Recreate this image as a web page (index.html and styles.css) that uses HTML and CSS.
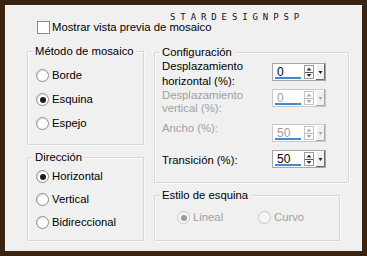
FILE: index.html
```html
<!DOCTYPE html>
<html lang="es">
<head>
    <meta charset="UTF-8">
    <meta name="viewport" content="width=device-width, initial-scale=1.0">
    <title>Mosaico</title>
    <link rel="stylesheet" href="styles.css">
</head>
<body>
    <div class="frame">
        <div class="panel">
            <div class="watermark">STARDESIGNPSP</div>
            <label class="check-row">
                <span class="checkbox"></span>
                <span>Mostrar vista previa de mosaico</span>
            </label>

            <div class="columns">
                <div class="col-left">
                    <div class="group group-method">
                        <div class="group-title">Método de mosaico</div>
                        <div class="radio-list">
                            <div class="radio-row"><span class="radio"></span>Borde</div>
                            <div class="radio-row"><span class="radio checked"></span>Esquina</div>
                            <div class="radio-row"><span class="radio"></span>Espejo</div>
                        </div>
                    </div>
                    <div class="group group-direction">
                        <div class="group-title">Dirección</div>
                        <div class="radio-list">
                            <div class="radio-row"><span class="radio checked"></span>Horizontal</div>
                            <div class="radio-row"><span class="radio"></span>Vertical</div>
                            <div class="radio-row"><span class="radio"></span>Bidireccional</div>
                        </div>
                    </div>
                </div>

                <div class="col-right">
                    <div class="group group-config">
                        <div class="group-title">Configuración</div>

                        <div class="field-row row-1">
                            <div class="field-label">Desplazamiento<br>horizontal (%):</div>
                            <div class="spin">
                                <span class="spin-value">0</span>
                                <span class="spin-bar"></span>
                                <svg class="spin-buttons" width="22" height="16" viewBox="0 0 22 16">
                                    <rect x="1.5" y="1.5" width="9" height="13" fill="#fff" stroke="#9a9a9a"/>
                                    <path d="M3.5 6.5 L8.5 6.5 L6 3.5 Z" fill="#333"/>
                                    <line x1="2" y1="8.5" x2="10" y2="8.5" stroke="#555"/>
                                    <path d="M3.5 10 L8.5 10 L6 13 Z" fill="#333"/>
                                    <rect x="13" y="0" width="9" height="16" fill="#f0f0f0"/>
                                    <path d="M13.5 16 L13.5 0.5 L21 0.5" fill="none" stroke="#fff"/>
                                    <path d="M21.5 0 L21.5 15.5 L13 15.5" fill="none" stroke="#696969"/>
                                    <path d="M15.5 7 L19.5 7 L17.5 10 Z" fill="#222"/>
                                </svg>
                            </div>
                        </div>

                        <div class="field-row row-2 disabled">
                            <div class="field-label">Desplazamiento<br>vertical (%):</div>
                            <div class="spin">
                                <span class="spin-value">0</span>
                                <span class="spin-bar"></span>
                                <svg class="spin-buttons" width="22" height="16" viewBox="0 0 22 16">
                                    <rect x="1.5" y="1.5" width="9" height="13" fill="#fff" stroke="#c4c4c4"/>
                                    <path d="M3.5 6.5 L8.5 6.5 L6 3.5 Z" fill="#a8a8a8"/>
                                    <line x1="2" y1="8.5" x2="10" y2="8.5" stroke="#b4b4b4"/>
                                    <path d="M3.5 10 L8.5 10 L6 13 Z" fill="#a8a8a8"/>
                                    <rect x="13" y="0" width="9" height="16" fill="#f0f0f0"/>
                                    <path d="M13.5 16 L13.5 0.5 L21 0.5" fill="none" stroke="#fff"/>
                                    <path d="M21.5 0 L21.5 15.5 L13 15.5" fill="none" stroke="#a9a9a9"/>
                                    <path d="M15.5 7 L19.5 7 L17.5 10 Z" fill="#a8a8a8"/>
                                </svg>
                            </div>
                        </div>

                        <div class="field-row row-3 disabled">
                            <div class="field-label">Ancho (%):</div>
                            <div class="spin">
                                <span class="spin-value">50</span>
                                <span class="spin-bar"></span>
                                <svg class="spin-buttons" width="22" height="16" viewBox="0 0 22 16">
                                    <rect x="1.5" y="1.5" width="9" height="13" fill="#fff" stroke="#c4c4c4"/>
                                    <path d="M3.5 6.5 L8.5 6.5 L6 3.5 Z" fill="#a8a8a8"/>
                                    <line x1="2" y1="8.5" x2="10" y2="8.5" stroke="#b4b4b4"/>
                                    <path d="M3.5 10 L8.5 10 L6 13 Z" fill="#a8a8a8"/>
                                    <rect x="13" y="0" width="9" height="16" fill="#f0f0f0"/>
                                    <path d="M13.5 16 L13.5 0.5 L21 0.5" fill="none" stroke="#fff"/>
                                    <path d="M21.5 0 L21.5 15.5 L13 15.5" fill="none" stroke="#a9a9a9"/>
                                    <path d="M15.5 7 L19.5 7 L17.5 10 Z" fill="#a8a8a8"/>
                                </svg>
                            </div>
                        </div>

                        <div class="field-row row-4">
                            <div class="field-label">Transición (%):</div>
                            <div class="spin">
                                <span class="spin-value">50</span>
                                <span class="spin-bar"></span>
                                <svg class="spin-buttons" width="22" height="16" viewBox="0 0 22 16">
                                    <rect x="1.5" y="1.5" width="9" height="13" fill="#fff" stroke="#9a9a9a"/>
                                    <path d="M3.5 6.5 L8.5 6.5 L6 3.5 Z" fill="#333"/>
                                    <line x1="2" y1="8.5" x2="10" y2="8.5" stroke="#555"/>
                                    <path d="M3.5 10 L8.5 10 L6 13 Z" fill="#333"/>
                                    <rect x="13" y="0" width="9" height="16" fill="#f0f0f0"/>
                                    <path d="M13.5 16 L13.5 0.5 L21 0.5" fill="none" stroke="#fff"/>
                                    <path d="M21.5 0 L21.5 15.5 L13 15.5" fill="none" stroke="#696969"/>
                                    <path d="M15.5 7 L19.5 7 L17.5 10 Z" fill="#222"/>
                                </svg>
                            </div>
                        </div>
                    </div>

                    <div class="group group-corner">
                        <div class="group-title">Estilo de esquina</div>
                        <div class="corner-options">
                            <div class="radio-row corner-item disabled"><span class="radio checked"></span>Lineal</div>
                            <div class="radio-row corner-item disabled"><span class="radio"></span>Curvo</div>
                        </div>
                    </div>
                </div>
            </div>
        </div>
    </div>
</body>
</html>
```

FILE: styles.css
```css
html, body {
    margin: 0;
    padding: 0;
}
body {
    background-color: #3b2311;
    font-family: "Liberation Sans", Arial, sans-serif;
    font-size: 11.3px;
    color: #000;
}
.frame {
    width: 367px;
    height: 256px;
    padding: 5px;
    box-sizing: border-box;
}
.panel {
    position: relative;
    width: 357px;
    height: 246px;
    background-color: #f0f0f0;
    box-shadow: inset 1px 1px 0 #fafafa;
}
.watermark {
    position: absolute;
    left: 165px;
    top: 8px;
    font-family: "DejaVu Sans Mono", monospace;
    font-size: 9px;
    line-height: 8px;
    letter-spacing: 4.9px;
    color: #111;
}

/* checkbox row */
.check-row {
    display: flex;
    align-items: center;
    gap: 2px;
    padding: 16px 0 0 32px;
    height: 13px;
    line-height: 13px;
}
.checkbox {
    width: 11px;
    height: 11px;
    border: 1px solid #8a8a8a;
    background-color: #fff;
}

.columns {
    display: flex;
    gap: 10px;
    padding: 17px 0 0 22px;
}
.col-left {
    width: 117px;
    display: flex;
    flex-direction: column;
    gap: 12px;
}
.col-right {
    width: 195px;
    display: flex;
    flex-direction: column;
    gap: 12px;
    padding-top: 1px;
}

/* group boxes */
.group {
    border: 1px solid #d8d8d8;
    box-shadow: inset 1px 1px 0 #fbfbfb, 1px 1px 0 #fbfbfb;
    box-sizing: border-box;
}
.group-title {
    display: table;
    margin: -8px 0 0 5px;
    padding: 0 2px;
    line-height: 14px;
    background-color: #f0f0f0;
}
.group-method {
    height: 94px;
}
.group-direction {
    height: 84px;
}
.group-config {
    height: 131px;
}
.group-corner {
    width: 186px;
    height: 46px;
}

/* radios */
.radio-list {
    display: flex;
    flex-direction: column;
    padding-left: 8px;
}
.group-method .radio-list {
    gap: 11px;
    margin-top: 11px;
}
.group-direction .radio-list {
    gap: 10px;
    margin-top: 6px;
}
.radio-row {
    display: flex;
    align-items: center;
    gap: 3px;
    height: 13px;
    line-height: 13px;
}
.radio {
    position: relative;
    width: 11px;
    height: 11px;
    border: 1px solid #8c8c8c;
    border-radius: 50%;
    background-color: #fff;
    box-shadow: inset 1px 1px 1px #e2e2e2;
}
.radio.checked::after {
    content: "";
    position: absolute;
    left: 2.5px;
    top: 2.5px;
    width: 6px;
    height: 6px;
    border-radius: 50%;
    background-color: #1c1c1c;
}
.radio-row.disabled {
    color: #a0a0a0;
}
.radio-row.disabled .radio {
    border-color: #c6c6c6;
    background-color: #f6f6f6;
    box-shadow: none;
}
.radio-row.disabled .radio.checked::after {
    background-color: #9a9a9a;
}

/* configuration rows */
.field-row {
    display: flex;
    align-items: flex-start;
    padding-left: 7px;
}
.field-label {
    width: 110px;
}
.row-1 {
    margin-top: 0;
    height: 30px;
}
.row-1 .field-label {
    line-height: 15px;
}
.row-1 .spin {
    margin-top: 4px;
}
.row-2 .field-label {
    line-height: 13px;
}
.row-2 {
    height: 26px;
}
.row-3 {
    margin-top: 7px;
}
.row-3 .field-label {
    line-height: 13px;
    padding-top: 0;
}
.row-3 .spin {
    margin-top: 2px;
}
.row-4 {
    margin-top: 8px;
}
.row-4 .field-label {
    line-height: 15px;
    padding-top: 3px;
}
.field-row.disabled .field-label {
    color: #a0a0a0;
}

/* spin box */
.spin {
    position: relative;
    display: flex;
    width: 54px;
    height: 18px;
    box-sizing: border-box;
    border: 1px solid #a6a6a6;
    background-color: #fff;
}
.spin-value {
    padding-left: 4px;
    line-height: 16px;
    font-size: 12px;
}
.spin-bar {
    position: absolute;
    left: 2px;
    top: 13px;
    width: 26px;
    height: 2px;
    background-color: #3f8ad2;
}
.spin-buttons {
    margin-left: auto;
}
.field-row.disabled .spin {
    border-color: #c8c8c8;
}
.field-row.disabled .spin-value {
    color: #a0a0a0;
}

/* corner style */
.corner-options {
    display: flex;
    padding-left: 22px;
    margin-top: 9px;
}
.corner-item {
    width: 82px;
}
```
